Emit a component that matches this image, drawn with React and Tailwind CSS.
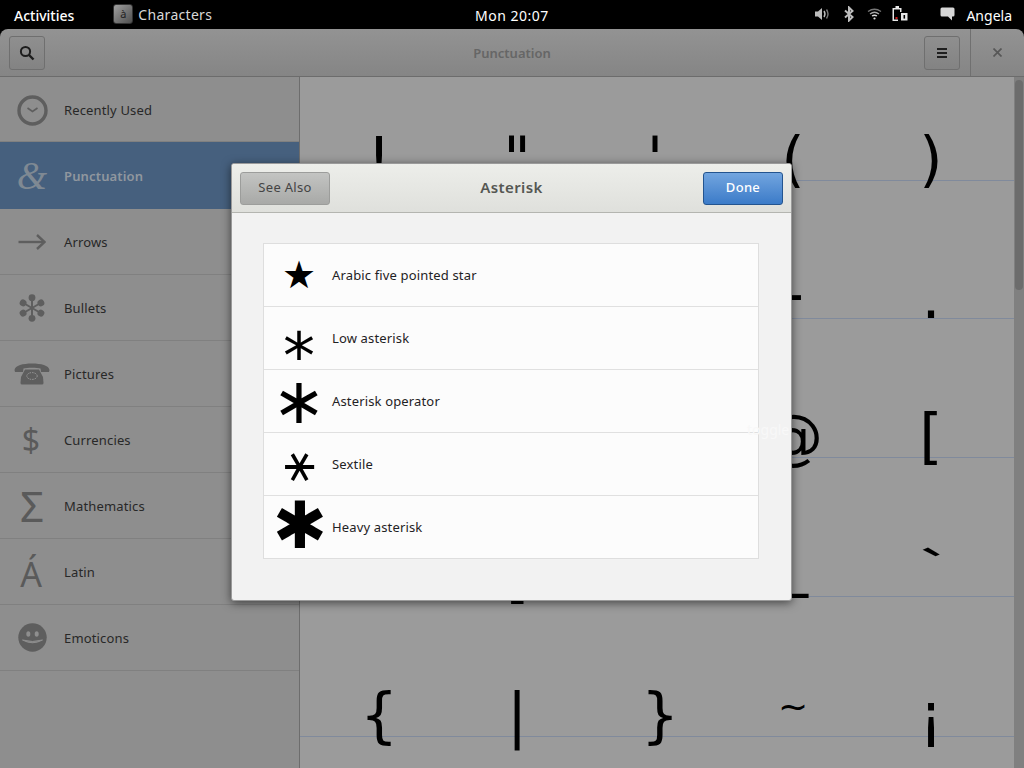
import React from "react";

const UI = { fontFamily: '"Noto Sans", "DejaVu Sans", sans-serif' };

function ClockIcon() {
  return (
    <svg width="31" height="31" viewBox="0 0 31 31" fill="none" stroke="#5e5e5e">
      <circle cx="15.5" cy="15.5" r="13.5" strokeWidth="3.4" />
      <path d="M10.5 13 L15.5 16.5 L20.5 13" strokeWidth="1.6" />
    </svg>
  );
}
function ArrowIcon() {
  return (
    <svg width="28" height="16" viewBox="0 0 28 16" fill="none" stroke="#5e5e5e" strokeWidth="2.4">
      <path d="M0.5 8 H26" />
      <path d="M19 1 L26.5 8 L19 15" />
    </svg>
  );
}
function BulletsIcon() {
  const a = [0, 60, 120, 180, 240, 300];
  return (
    <svg width="28" height="28" viewBox="0 0 28 28" fill="#5e5e5e" stroke="#5e5e5e">
      {a.map((d) => (
        <g key={d} transform={`rotate(${d} 14 14)`}>
          <line x1="14" y1="14" x2="14" y2="5" strokeWidth="2" />
          <circle cx="14" cy="3.7" r="3.4" stroke="none" />
        </g>
      ))}
    </svg>
  );
}
function PhoneIcon() {
  return (
    <svg width="36" height="22" viewBox="0 0 36 22" fill="#5e5e5e">
      <path d="M0.5 7 C1 2.5 9 0.5 18 0.5 C27 0.5 35 2.5 35.5 7 L35 9 L27 9 L26.5 5.5 C23 4.5 13 4.5 9.5 5.5 L9 9 L1 9 Z" />
      <path d="M11 6.5 H25 L29 14 L29.5 20 Q29.5 21.5 28 21.5 H8 Q6.5 21.5 6.5 20 L7 14 Z" />
      <ellipse cx="18" cy="13" rx="5.2" ry="3.4" fill="none" stroke="#9a9a9a" strokeWidth="1" strokeDasharray="1.5 1" />
    </svg>
  );
}
function SmileIcon() {
  return (
    <svg width="29" height="29" viewBox="0 0 29 29">
      <circle cx="14.5" cy="14.5" r="14.2" fill="#5e5e5e" />
      <ellipse cx="10.3" cy="11" rx="2" ry="2.8" fill="#8e8e8e" />
      <ellipse cx="18.7" cy="11" rx="2" ry="2.8" fill="#8e8e8e" />
      <path d="M4.5 17 Q14.5 20 24.5 17 Q14.5 22.5 4.5 17 Z" fill="#8e8e8e" stroke="#8e8e8e" />
    </svg>
  );
}
function Glyph({ children, className }) {
  return <span className={`text-[#5a5a5a] leading-none ${className}`}>{children}</span>;
}

const rows = [
  { label: "Recently Used", icon: <ClockIcon />, h: "h-[65px] pt-[2px]" },
  {
    label: "Punctuation",
    selected: true,
    h: "h-[67px]",
    icon: (
      <span className="text-[#7f8993] text-[39px] italic leading-none" style={{ fontFamily: '"Liberation Serif", serif' }}>
        &amp;
      </span>
    ),
  },
  { label: "Arrows", icon: <ArrowIcon /> },
  { label: "Bullets", icon: <BulletsIcon /> },
  { label: "Pictures", icon: <PhoneIcon /> },
  { label: "Currencies", icon: <Glyph className="text-[32px] -translate-x-[1px]">$</Glyph> },
  { label: "Mathematics", icon: <Glyph className="text-[42px]">Σ</Glyph> },
  { label: "Latin", icon: <Glyph className="text-[34px] translate-y-[2px] -translate-x-[1px]">Á</Glyph> },
  { label: "Emoticons", icon: <SmileIcon /> },
];

const rowHeights = ["h-[140px]", "h-[138px]", "h-[139px]", "h-[139px]", "h-[140px]"];

const chars = [
  [["!"], ['"'], ["'"], ["("], [")"]],
  [["&"], ["*"], [","], ["-", "text-[60px] -translate-y-[4px]"], ["."]],
  [[":"], [";"], ["?"], ["@"], ["["]],
  [["#"], ["]"], ["^"], ["_", "text-[60px] -translate-y-[12px]"], ["`", "text-[60px] -rotate-[22deg] translate-x-[11px] -translate-y-[4px]"]],
  [["{"], ["|"], ["}", "text-[60px] translate-x-[5px]"], ["~", "text-[36px] -translate-y-[8px]"], ["¡"]],
];

const related = [
  { c: "★", label: "Arabic five pointed star", cls: "text-[38px] translate-x-[1px]" },
  { c: "⁎", label: "Low asterisk", cls: "text-[64px] translate-x-[1px] -translate-y-[2px]" },
  { c: "∗", label: "Asterisk operator", cls: "text-[64px] translate-x-[1px]" },
  { c: "⚹", label: "Sextile", cls: "text-[52px] translate-x-[1px] -translate-y-[2px]" },
  { c: "✱", label: "Heavy asterisk", cls: "text-[65px] translate-x-[2px] -translate-y-[2px]" },
];

function TopBar() {
  return (
    <div className="h-[29px] shrink-0 bg-black flex items-center text-[14px] relative" style={UI}>
      <span className="ml-[14px] mt-[1px] text-white font-medium">Activities</span>
      <div className="ml-[39px] -mt-[1px] w-[20px] h-[20px] rounded-[3px] border border-[#333] flex items-center justify-center text-[11px] text-[#222] bg-gradient-to-br from-[#a0a0a0] to-[#505050]">
        à
      </div>
      <span className="ml-[5px] -mt-[1px] text-[#d8d8d8] tracking-[0.3px]">Characters</span>
      <span className="absolute left-[475px] mt-[1px] text-white tracking-[0.5px]">Mon 20:07</span>
      <div className="ml-auto flex items-center text-[#e6e6e6]">
        <svg width="16" height="14" viewBox="0 0 16 14" className="mr-[13px] -mt-[2px]" fill="#bdbdbd">
          <path d="M0 4.5 H3 L7 1 V13 L3 9.5 H0 Z" />
          <path d="M9 4 Q11 7 9 10" fill="none" stroke="#bdbdbd" strokeWidth="1.4" />
          <path d="M11.5 2.5 Q14.5 7 11.5 11.5" fill="none" stroke="#777" strokeWidth="1.4" />
        </svg>
        <svg width="10" height="16" viewBox="0 0 10 16" className="mr-[13px] -mt-[2px]" fill="none" stroke="#bdbdbd" strokeWidth="2">
          <path d="M1 4.5 L8.5 11 L5 14.5 V1.5 L8.5 5 L1 11.5" />
        </svg>
        <svg width="15" height="12" viewBox="0 0 15 12" className="mr-[10px] -mt-[2px]" fill="none" stroke="#a8a8a8" strokeWidth="1.3">
          <path d="M1 3.5 Q7.5 -1 14 3.5" stroke="#777" />
          <path d="M3 6 Q7.5 2.5 12 6" />
          <path d="M5 8 Q7.5 6.5 10 8" stroke="#ddd" />
          <circle cx="7.5" cy="10.5" r="1.1" fill="#ddd" stroke="none" />
        </svg>
        <svg width="16" height="17" viewBox="0 0 16 17" className="mr-[32px] -mt-[2px]">
          <path d="M3.5 1 H7 V3 H9.5 V7 H8 V4.5 H2 V14.5 H6 V16 H0.5 V3 H3.5 Z" fill="#e8e8e8" />
          <rect x="3.5" y="12" width="2" height="2" fill="#d01c1c" />
          <path d="M9 8 H15.5 V15.5 H9 Z" fill="#e8e8e8" />
          <rect x="11.5" y="10" width="1.6" height="3.6" fill="#000" />
        </svg>
        <svg width="15" height="14" viewBox="0 0 15 14" className="mr-[11px] -mt-[2px]" fill="#d6d6d6">
          <path d="M2 0.5 H13 Q14.5 0.5 14.5 2 V8 Q14.5 9.5 13 9.5 H12 V13.5 L8 9.5 H2 Q0.5 9.5 0.5 8 V2 Q0.5 0.5 2 0.5 Z" />
        </svg>
        <span className="mr-[12px] mt-[1px] text-white">Angela</span>
      </div>
    </div>
  );
}

function HeaderButton({ children }) {
  return (
    <div className="w-[36px] h-[34px] rounded-[3px] border border-[#6f6f6f] bg-gradient-to-b from-[#8f8f8f] to-[#838383] flex items-center justify-center">
      {children}
    </div>
  );
}

function HeaderBar() {
  return (
    <div className="h-[48px] shrink-0 rounded-t-[8px] bg-gradient-to-b from-[#939393] to-[#858585] border-b border-[#6c6c6c] flex items-center pl-[9px] relative" style={UI}>
      <HeaderButton>
        <svg width="16" height="16" viewBox="0 0 16 16" fill="none" stroke="#1d1d1d" strokeWidth="2">
          <circle cx="6.5" cy="6.5" r="4.6" />
          <path d="M10 10 L14.5 14.5" strokeWidth="2.4" />
        </svg>
      </HeaderButton>
      <span className="absolute left-0 right-0 mt-[2px] text-center text-[13px] font-semibold text-[#666666]">Punctuation</span>
      <div className="ml-auto flex items-stretch h-full relative">
        <div className="flex items-center pr-[10px]">
          <HeaderButton>
            <div className="w-[10px] flex flex-col gap-[2px]">
              <div className="h-[2px] bg-[#1f1f1f]" />
              <div className="h-[2px] bg-[#1f1f1f]" />
              <div className="h-[2px] bg-[#1f1f1f]" />
            </div>
          </HeaderButton>
        </div>
        <div className="w-[54px] border-l border-[#707070] flex items-center justify-center">
          <svg width="9" height="9" viewBox="0 0 9 9" stroke="#575757" strokeWidth="1.7">
            <path d="M0.5 0.5 L8.5 8.5 M8.5 0.5 L0.5 8.5" />
          </svg>
        </div>
      </div>
    </div>
  );
}

function Sidebar() {
  return (
    <div className="w-[300px] shrink-0 bg-[#8e8e8e] border-r border-[#6d6d6d] flex flex-col" style={UI}>
      {rows.map((r) => (
        <div
          key={r.label}
          className={`flex items-center shrink-0 ${r.h || "h-[66px]"} ${
            r.selected ? "bg-[#46607e]" : "border-b border-[#808080]"
          }`}
        >
          <div className="w-[64px] h-full flex items-center justify-center">{r.icon}</div>
          <span
            className={`text-[13px] pt-[2px] tracking-[0.15px] ${r.selected ? "text-[#90979e] font-semibold" : "text-[#282828]"}`}
          >
            {r.label}
          </span>
        </div>
      ))}
    </div>
  );
}

function CharGrid() {
  return (
    <div className="flex-1 min-w-0 bg-[#9b9b9b] overflow-hidden flex">
      <div className="flex-1 min-w-0 -mt-[36px]" style={{ fontFamily: '"DejaVu Sans", sans-serif' }}>
        {chars.map((row, i) => (
          <div
            key={i}
            className={`${rowHeights[i]} border-b border-[#808a9c] grid grid-cols-[repeat(5,138px)] pl-[10px] items-end`}
          >
            {row.map(([c, cls]) => (
              <div key={c} className="h-[60px] flex justify-center">
                <span className="translate-y-[9px]">
                  <span className={`block leading-[60px] text-black ${cls || "text-[60px]"}`}>{c}</span>
                </span>
              </div>
            ))}
          </div>
        ))}
      </div>
      <div className="w-[10px] shrink-0 bg-[#808080] pt-[3px] pl-[1px] pr-[1px]">
        <div className="h-[210px] rounded-[4px] bg-[#6c6c6c]" />
      </div>
    </div>
  );
}

function Dialog() {
  return (
    <div
      className="absolute left-[231px] top-[163px] w-[561px] h-[438px] rounded-[3px] bg-[#f2f2f2] border border-[#9a9a9a] flex flex-col overflow-hidden shadow-[0_2px_10px_rgba(0,0,0,0.55)]"
      style={UI}
    >
      <div className="h-[49px] shrink-0 bg-gradient-to-b from-[#edeeea] to-[#dfe0dc] border-b border-[#b4b5b0] flex items-center px-[8px] relative">
        <div className="w-[90px] h-[33px] rounded-[3px] border border-[#9c9d9b] bg-gradient-to-b from-[#c3c4c2] to-[#a8a9a7] flex items-center justify-center text-[13px] text-[#444444] tracking-[0.3px]">
          See Also
        </div>
        <span className="absolute left-0 right-0 -mt-[2px] text-center text-[15px] font-semibold text-[#555753] tracking-[0.4px]">Asterisk</span>
        <div className="ml-auto w-[80px] h-[33px] rounded-[3px] border border-[#23548f] bg-gradient-to-b from-[#72a5df] to-[#3b7bc8] flex items-center justify-center text-[13px] font-medium text-white tracking-[0.3px]">
          Done
        </div>
      </div>
      <div className="flex-1 pt-[30px] px-[31px] relative">
        <div className="w-[496px] border border-[#dedede] bg-[#fcfcfc]">
          {related.map((r, i) => (
            <div
              key={r.label}
              className={`flex items-center ${i < related.length - 1 ? "h-[63px] border-b border-[#e0e0e0]" : "h-[62px]"}`}
            >
              <div className="w-[68px] h-full shrink-0 flex items-center justify-center overflow-visible">
                <span className={`text-black leading-none ${r.cls}`} style={{ fontFamily: '"DejaVu Sans", sans-serif' }}>
                  {r.c}
                </span>
              </div>
              <span className="text-[13px] pt-[2px] text-[#1f2224] tracking-[0.15px]">{r.label}</span>
            </div>
          ))}
        </div>
        <span className="absolute left-[515px] top-[206px] text-[14px] text-[#f8f8f8]">toggle</span>
      </div>
    </div>
  );
}

export default function App() {
  return (
    <div className="w-[1024px] h-[768px] bg-black overflow-hidden relative flex flex-col">
      <TopBar />
      <HeaderBar />
      <div className="flex-1 min-h-0 flex">
        <Sidebar />
        <CharGrid />
      </div>
      <Dialog />
    </div>
  );
}
